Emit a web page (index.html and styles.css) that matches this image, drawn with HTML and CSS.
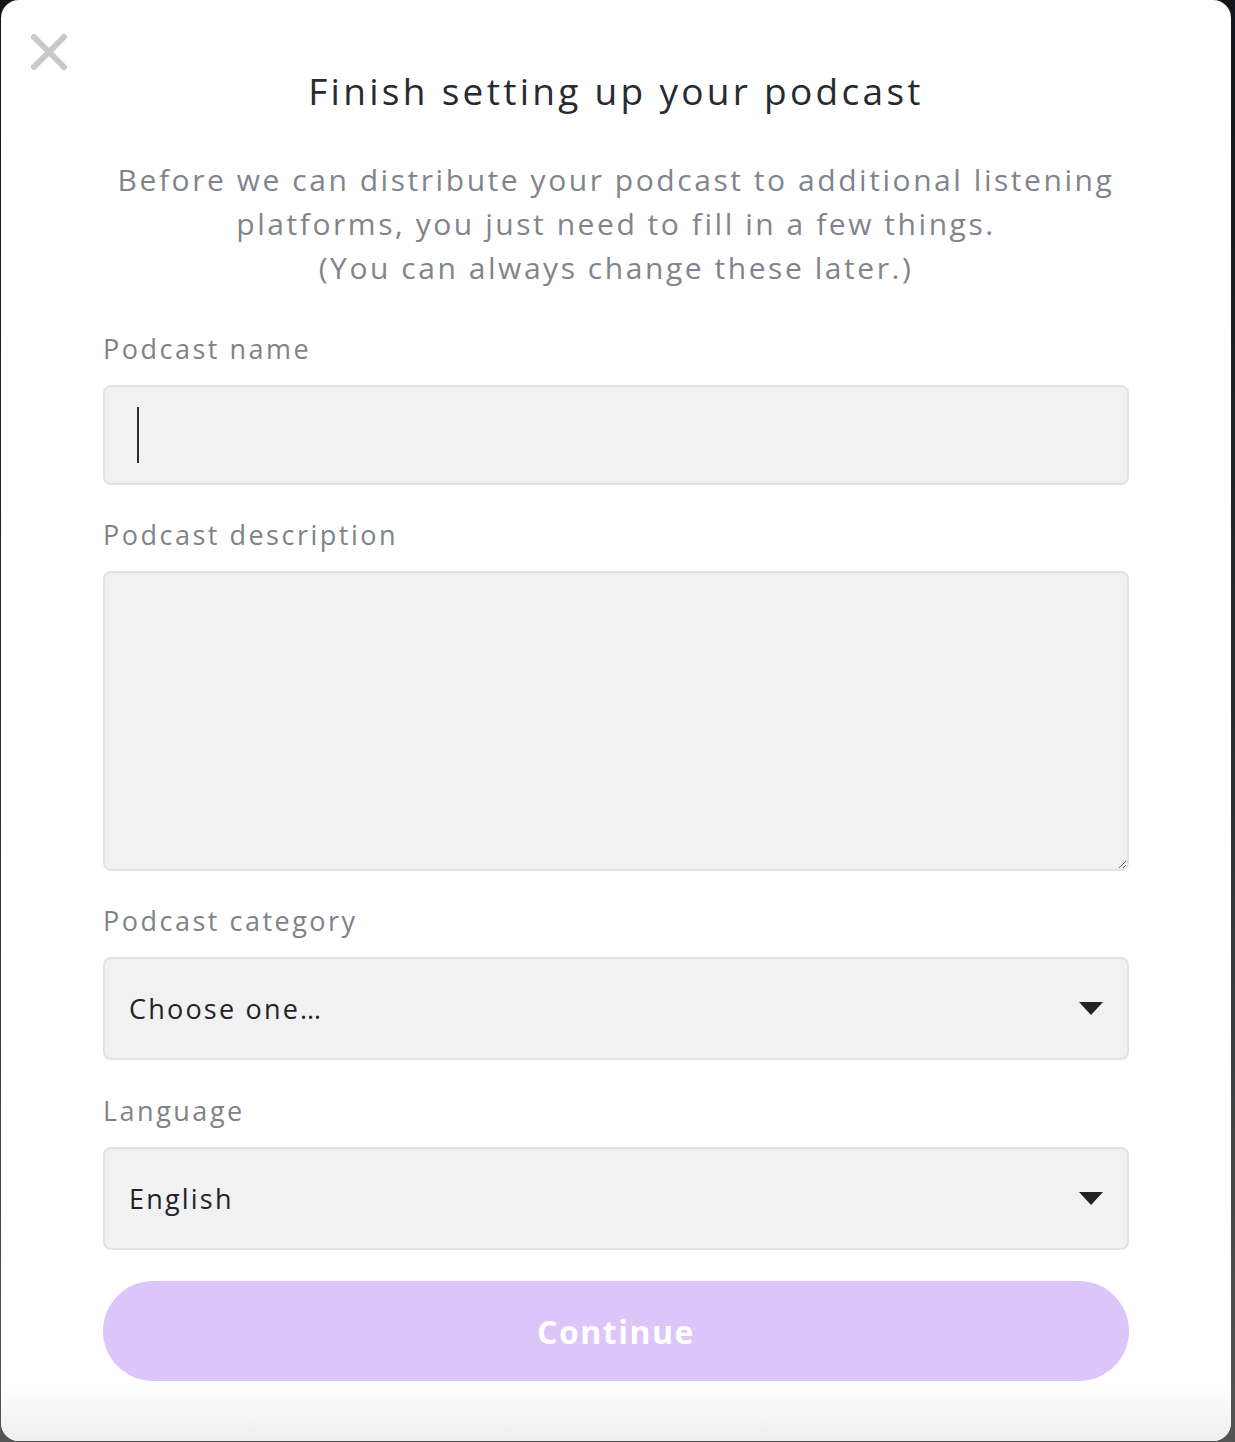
FILE: index.html
```html
<!DOCTYPE html>
<html lang="en">
<head>
<meta charset="utf-8">
<title>Finish setting up your podcast</title>
<link rel="stylesheet" href="styles.css">
</head>
<body>
<div class="modal">
  <button class="close" aria-label="Close">
    <svg width="36" height="36" viewBox="0 0 36 36"><path d="M3 3 L33 33 M33 3 L3 33" stroke="#c9c9c9" stroke-width="6" stroke-linecap="round" fill="none"/></svg>
  </button>
  <h1 class="title">Finish setting up your podcast</h1>
  <p class="subtitle">Before we can distribute your podcast to additional listening platforms, you just need to fill in a few things.<br>(You can always change these later.)</p>
  <form class="form">
    <label class="label" for="name">Podcast name</label>
    <div class="input-wrap">
      <input id="name" class="input" type="text">
      <span class="caret"></span>
    </div>
    <label class="label" for="desc">Podcast description</label>
    <textarea id="desc" class="textarea"></textarea>
    <label class="label" for="cat">Podcast category</label>
    <div class="select-wrap">
      <select id="cat" class="select"><option>Choose one…</option></select>
      <svg class="arrow" width="24" height="13" viewBox="0 0 24 13"><path d="M0 0 H24 L12 13 Z" fill="#222"/></svg>
    </div>
    <label class="label" for="lang">Language</label>
    <div class="select-wrap">
      <select id="lang" class="select"><option>English</option></select>
      <svg class="arrow" width="24" height="13" viewBox="0 0 24 13"><path d="M0 0 H24 L12 13 Z" fill="#222"/></svg>
    </div>
    <button type="button" class="continue">Continue</button>
  </form>
  <div class="fade"></div>
</div>
</body>
</html>
```
FILE: styles.css
```css
html, body {
  margin: 0;
  padding: 0;
}
body {
  background: linear-gradient(#121519 0%, #2a2c2e 50%, #555 100%);
  height: 1442px;
  overflow: hidden;
  font-family: "Open Sans", "DejaVu Sans", sans-serif;
}
.modal {
  position: relative;
  margin-left: 1px;
  width: 1230px;
  height: 1441px;
  box-sizing: border-box;
  background: #fff;
  border-radius: 18px;
  padding: 67px 102px 0 102px;
  overflow: hidden;
}
.close {
  position: absolute;
  left: 30px;
  top: 34px;
  width: 36px;
  height: 36px;
  padding: 0;
  border: 0;
  background: none;
}
.close svg { display: block; }
.title {
  margin: 0;
  text-align: center;
  font-size: 37px;
  line-height: 48px;
  font-weight: 400;
  letter-spacing: 3.3px;
  color: #262b31;
}
.subtitle {
  margin: 43px 0 0 0;
  text-align: center;
  font-size: 30px;
  line-height: 44px;
  letter-spacing: 2.55px;
  color: #80858b;
}
.form {
  display: flex;
  flex-direction: column;
  margin-top: 41px;
}
.label {
  display: block;
  font-size: 27px;
  line-height: 36px;
  letter-spacing: 2.5px;
  color: #7e8388;
  margin-bottom: 18px;
}
.input-wrap, .select-wrap {
  position: relative;
}
.input, .textarea, .select {
  display: block;
  width: 100%;
  box-sizing: border-box;
  background: #f1f1f1;
  border: 2px solid #e2e2e2;
  border-radius: 8px;
  margin: 0 0 32px 0;
  font-family: inherit;
  outline: none;
}
.input { height: 100px; }
.caret {
  position: absolute;
  left: 34px;
  top: 22px;
  width: 2px;
  height: 56px;
  background: #2a2f35;
}
.textarea {
  height: 300px;
  resize: vertical;
}
.select {
  -webkit-appearance: none;
  appearance: none;
  height: 103px;
  padding: 0 0 0 24px;
  font-size: 27px;
  letter-spacing: 2.2px;
  color: #1f2328;
  margin-bottom: 33px;
}
.select-wrap:last-of-type .select { margin-bottom: 31px; }
.arrow {
  position: absolute;
  right: 26px;
  top: 45px;
}
.continue {
  height: 100px;
  border: 0;
  border-radius: 50px;
  background: #dcc5f9;
  color: #fff;
  font-family: inherit;
  font-size: 32px;
  font-weight: 700;
  letter-spacing: 1.5px;
}
.fade {
  position: absolute;
  left: 0;
  right: 0;
  bottom: 0;
  height: 60px;
  background: linear-gradient(rgba(239,239,239,0), #efefef);
  pointer-events: none;
}
```
